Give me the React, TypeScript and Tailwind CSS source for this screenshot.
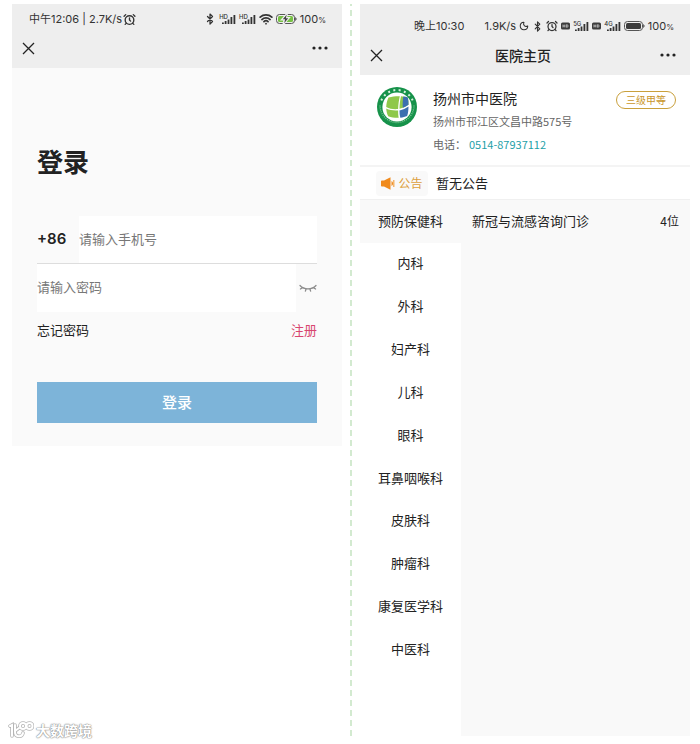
import type { ReactNode } from "react";
import { useId, useState } from "react";
import { AlarmClock, Bluetooth, Moon, Wifi } from "lucide-react";
import { clsx } from "clsx";

const departments = [
  "预防保健科",
  "内科",
  "外科",
  "妇产科",
  "儿科",
  "眼科",
  "耳鼻咽喉科",
  "皮肤科",
  "肿瘤科",
  "康复医学科",
  "中医科",
];

function Signal({ label }: { label: string }) {
  return (
    <span className="flex items-center">
      <span className="-mr-1.5 self-start text-[6px] leading-[6px] font-medium">{label}</span>
      <svg width="14" height="11" viewBox="0 0 14 11" fill="currentColor" aria-hidden="true">
        <rect x="0" y="8.500" width="1.800" height="1.500" />
        <rect x="2.700" y="7" width="1.800" height="3" />
        <rect x="5.600" y="5.500" width="1.800" height="4.500" />
        <rect x="8.500" y="3" width="1.800" height="7" />
        <rect x="11.500" y="1" width="1.800" height="9" />
      </svg>
    </span>
  );
}

function HdBadge() {
  return (
    <svg width="9" height="8" viewBox="0 0 10 8" fill="none" aria-hidden="true">
      <rect width="10" height="8" rx="1.800" fill="#3c3c3c" />
      <path d="M2.200 2.400v3.200M2.200 4h2M4.300 2.400v3.200M6 2.600v2.800h.8c1.400 0 1.400-2.800 0-2.800H6Z" stroke="#eee" strokeWidth=".7" />
    </svg>
  );
}

function Battery({ charging = false }: { charging?: boolean }) {
  return (
    <svg width="21" height="10" viewBox="0 0 21 10" fill="none" aria-hidden="true">
      <rect x=".5" y=".5" width="18" height="9" rx="3" stroke="#555" />
      <path d="M19.500 3.500c1 .3 1 2.700 0 3v-3Z" fill="#555" stroke="#555" strokeWidth=".6" />
      <rect x="2" y="2" width="15" height="6" rx="1.500" fill={charging ? "#76c043" : "#3c3c3c"} />
      {charging ? (
        <>
          <path d="M10.800.2 6.200 5.400h2.300l-.9 4.400 5-5.700h-2.500l.7-3.900Z" stroke="#eeeeee" strokeWidth="2" />
          <path d="M10.800.6 6.800 5.300h2.300l-.9 4 4-5H9.900l.9-3.700Z" fill="#444" />
        </>
      ) : null}
    </svg>
  );
}

function Percent() {
  return (
    <span>
      100<span className="text-[8px]">%</span>
    </span>
  );
}

function PhoneHeader({ status, title, className }: { status: ReactNode; title?: string; className?: string }) {
  return (
    <header className={clsx("bg-[#eeeeee] pb-1.5 text-[#222222]", className)}>
      <div className="flex h-[30px] items-center justify-between pr-4 pl-[17px] font-['Inter','Noto_Sans_CJK_SC',sans-serif] text-[11px] whitespace-nowrap text-[#333333]">
        {status}
      </div>
      <div className="grid h-7 grid-cols-[1fr_auto_1fr] items-center pr-[14px] pl-[10px]">
        <button type="button" aria-label="关闭" className="justify-self-start">
          <svg width="13" height="13" viewBox="0 0 13 13" fill="none" stroke="currentColor" strokeWidth="1.3" aria-hidden="true">
            <path d="M1 1l11 11M12 1L1 12" />
          </svg>
        </button>
        <h2 className="text-sm font-medium">{title}</h2>
        <button type="button" aria-label="更多" className="justify-self-end">
          <svg width="16" height="4" viewBox="0 0 16 4" fill="currentColor" aria-hidden="true">
            <circle cx="2" cy="2" r="1.6" />
            <circle cx="8" cy="2" r="1.6" />
            <circle cx="14" cy="2" r="1.6" />
          </svg>
        </button>
      </div>
    </header>
  );
}

function LoginScreen() {
  const phoneId = useId();
  const [showPassword, setShowPassword] = useState(false);

  return (
    <section className="self-start bg-[#fafafa]">
      <PhoneHeader
        status={
          <>
            <span className="flex items-center gap-px">
              中午12:06 | 2.7K/s
              <AlarmClock size={13} strokeWidth={2.5} />
            </span>
            <span className="flex items-center gap-[3px]">
              <Bluetooth size={12} strokeWidth={2.5} />
              <Signal label="HD" />
              <Signal label="HD" />
              <Wifi size={14} strokeWidth={3} />
              <Battery charging />
              <Percent />
            </span>
          </>
        }
      />
      <form className="px-[25px] pt-[73px] pb-[23px] text-[13px] text-[#222222]" onSubmit={(event) => event.preventDefault()}>
        <h1 className="text-[26px] leading-10 font-bold">登录</h1>
        <div className="mt-[35px] flex h-12 items-stretch border-b border-[#dddddd]">
          <label htmlFor={phoneId} className="flex w-[42px] items-center font-['Inter',sans-serif] text-[15px] font-semibold">
            +86
          </label>
          <input
            id={phoneId}
            type="tel"
            placeholder="请输入手机号"
            className="min-w-0 flex-1 bg-white pb-0.5 outline-none placeholder:text-[#777777]"
          />
        </div>
        <div className="flex h-12 items-stretch">
          <input
            aria-label="密码"
            type={showPassword ? "text" : "password"}
            placeholder="请输入密码"
            className="min-w-0 flex-1 bg-white pb-0.5 outline-none placeholder:text-[#777777]"
          />
          <button
            type="button"
            aria-label="显示密码"
            className="flex w-[21px] items-center justify-end"
            onClick={() => setShowPassword(!showPassword)}
          >
            <svg width="18" height="9" viewBox="0 0 18 9" fill="none" stroke="#8c8c8c" strokeWidth="1.3" strokeLinecap="round" aria-hidden="true">
              <path d="M1 1.500c4 4.500 12 4.500 16 0M3.600 3.600 1.400 5M7 5l-.6 2.200M11 5l.6 2.200M14.400 3.600l2.200 1.400" />
            </svg>
          </button>
        </div>
        <div className="mt-2 flex justify-between leading-5">
          <a href="#forgot">忘记密码</a>
          <a href="#register" className="text-[#d8456f]">
            注册
          </a>
        </div>
        <button type="submit" className="mt-[42px] h-[41px] w-full bg-[#7db4d9] text-[15px] font-medium text-white">
          登录
        </button>
      </form>
    </section>
  );
}

function HospitalLogo() {
  return (
    <svg width="40" height="40" viewBox="0 0 40 40" fill="none" className="shrink-0" aria-hidden="true">
      <circle cx="20" cy="20" r="20" fill="#16924a" />
      <path d="M4.300 13.500a17 17 0 0 1 31.400 0" stroke="#d6efdd" strokeWidth="2" strokeDasharray="2 3.400" />
      <path d="M3 18.500a17 17 0 0 0 34 0" stroke="#7cc596" strokeWidth="1.400" strokeDasharray="1 1" />
      <circle cx="20" cy="20" r="14.600" fill="white" />
      <path d="M11.500 10.500c4-1 7.500-1.300 11.300-1.200-.9 4-1.500 7.700-1.700 12.700-4.300.4-8.300-.1-11.900-2 .2-3.500.9-6.500 2.300-9.500Z" fill="#8fc84a" />
      <path d="M9.200 21.600c3.700 1.700 7.500 2.200 11.900 1.900 0 2.700.1 4.600.6 7.300-3.800.1-7.300-.3-10.500-1.500-1.200-2.400-1.800-4.900-2-7.700Z" fill="#8fc84a" />
      <path d="M24 9.300c2.600.1 4.800.5 6.800 1.200.6 2.600.8 5 .7 7.300-2.700 2-5.500 3.300-9 4 .1-4.400.5-8.200 1.500-12.500Z" fill="#8fc84a" />
      <path d="M26.300 9.500c1.600.1 3.100.5 4.500 1 .6 2.600.8 5 .7 7.300-1.800 1.300-3.600 2.300-5.700 3-.3-4 0-7.500.5-11.300Z" fill="#3b6faf" />
      <path d="M31.500 19.400c0 3.600-.4 6.600-1.400 9.700-2 .9-4.200 1.500-6.800 1.700-.6-2.500-.8-4.900-.8-7.400 3.400-.7 6.200-2 9-4Z" fill="#3b6faf" />
    </svg>
  );
}

function HospitalScreen() {
  const [active, setActive] = useState(departments[0]);

  return (
    <section className="flex flex-col bg-white text-[#222222]">
      <PhoneHeader
        className="pt-[7px]"
        title="医院主页"
        status={
          <>
            <span className="pl-[37px]">晚上10:30</span>
            <span className="flex items-center gap-[3px]">
              1.9K/s
              <Moon size={10} strokeWidth={2.5} />
              <Bluetooth size={11} strokeWidth={2.5} />
              <AlarmClock size={12} strokeWidth={2.5} />
              <HdBadge />
              <Signal label="5G" />
              <HdBadge />
              <Signal label="4G" />
              <Battery />
              <Percent />
            </span>
          </>
        }
      />
      <div className="flex items-start border-b-2 border-[#f4f4f4] pt-3 pr-[14px] pb-[9px] pl-[17px] text-[11px] leading-[23px] text-[#666666]">
        <HospitalLogo />
        <div className="ml-4 min-w-0 flex-1">
          <h3 className="text-sm leading-[23px] text-[#222222]">扬州市中医院</h3>
          <p>扬州市邗江区文昌中路575号</p>
          <p>
            电话：
            <a href="tel:0514-87937112" className="ml-[3px] text-[#1e9fa8]">
              0514-87937112
            </a>
          </p>
        </div>
        <span className="mt-1 -ml-4 rounded-full border border-[#c9a03c] px-[9px] text-[10px] leading-4 text-[#c9962a]">三级甲等</span>
      </div>
      <div className="flex h-[33px] items-center border-b border-[#f0f0f0] pl-4 text-[13px]">
        <span className="mr-2 flex h-[25px] w-[52px] items-center justify-center gap-[3px] rounded bg-[#f9f9f9] text-xs text-[#dd9f3c]">
          <svg width="14" height="13" viewBox="0 0 14 13" fill="#f08a1c" aria-hidden="true">
            <path d="M0 4.200Q0 3.500.8 3.500H3L9.500.3V12.700L3 9.500H.8Q0 9.500 0 8.800Z" />
            <path d="M10.500 4c2 .8 2 4.200 0 5Z" />
            <path d="M12.800 3v7" stroke="#f3a54a" strokeWidth="1.200" />
          </svg>
          公告
        </span>
        <p>暂无公告</p>
      </div>
      <div className="flex flex-1 bg-[#f9f9f9] text-[13px]">
        <nav className="w-[101px] bg-white">
          <div className="grid h-[471px] auto-rows-fr">
            {departments.map((name) => (
              <button
                key={name}
                type="button"
                className={clsx("pb-0.5 text-center", name === active ? "bg-[#f9f9f9]" : "bg-white")}
                onClick={() => setActive(name)}
              >
                {name}
              </button>
            ))}
          </div>
        </nav>
        <div className="flex h-[43px] flex-1 items-center justify-between px-[11px] pb-0.5">
          <p>新冠与流感咨询门诊</p>
          <span className="text-xs">4位</span>
        </div>
      </div>
    </section>
  );
}

function Watermark() {
  return (
    <div className="absolute bottom-1 left-2 flex items-center gap-0.5 text-sm leading-5 font-bold text-white [text-shadow:0_0_1px_#888,0_0_1px_#888,0_0_2px_#aaa]">
      <svg width="26" height="18" viewBox="0 0 26 18" fill="none" strokeLinecap="round" aria-hidden="true">
        <g stroke="#b5b5b5" strokeWidth="3.600">
          <path d="M2 5l2-1v11M7 4v7c0 5 7 6 8 1M7 10l4-3" />
          <circle cx="15" cy="5" r="3" />
          <circle cx="21.500" cy="5" r="3" />
        </g>
        <g stroke="#ffffff" strokeWidth="2">
          <path d="M2 5l2-1v11M7 4v7c0 5 7 6 8 1M7 10l4-3" />
          <circle cx="15" cy="5" r="3" />
          <circle cx="21.500" cy="5" r="3" />
        </g>
      </svg>
      大数跨境
    </div>
  );
}

export default function App() {
  return (
    <main className="relative grid min-h-screen grid-cols-[1fr_2px_1fr] gap-2 bg-white pt-1 pr-2.5 pb-2 pl-3 font-['Noto_Sans_CJK_SC',sans-serif]">
      <LoginScreen />
      <div className="bg-[repeating-linear-gradient(to_bottom,#d3ead0_0px,#d3ead0_2px,transparent_2px,transparent_6px,#d3ead0_6px,#d3ead0_10px)]" />
      <HospitalScreen />
      <Watermark />
    </main>
  );
}
